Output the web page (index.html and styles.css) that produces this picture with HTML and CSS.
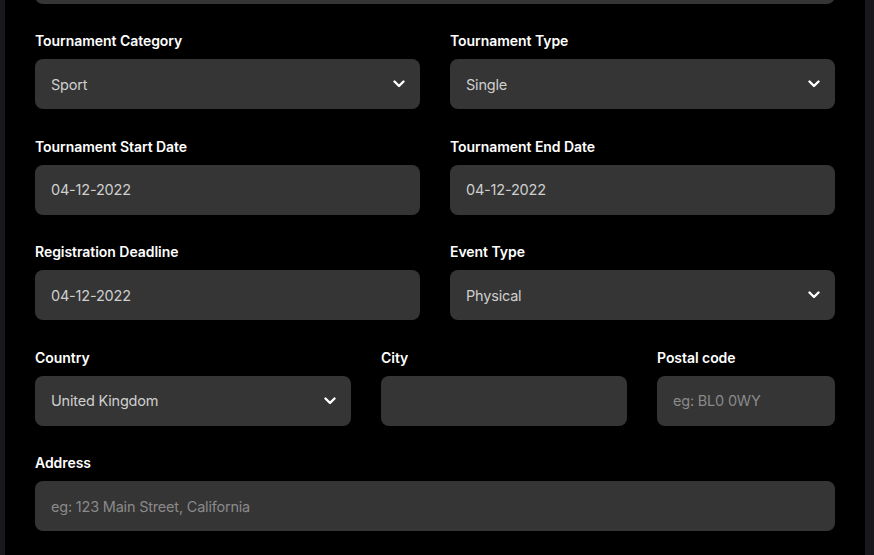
FILE: index.html
```html
<!DOCTYPE html>
<html lang="en">
<head>
<meta charset="utf-8">
<title>Tournament form</title>
<link rel="stylesheet" href="styles.css">
</head>
<body>
<div class="shell">
  <div class="panel">
    <form class="form">
      <div class="field">
        <div class="input"></div>
      </div>

      <div class="row two">
        <div class="field">
          <label class="label">Tournament Category</label>
          <div class="input select"><span class="value">Sport</span>
            <svg class="chev" viewBox="0 0 12 8" width="12" height="8"><path d="M1.5 1.5 L6 6 L10.5 1.5" fill="none" stroke="#fff" stroke-width="2.4" stroke-linecap="round" stroke-linejoin="round"/></svg>
          </div>
        </div>
        <div class="field">
          <label class="label">Tournament Type</label>
          <div class="input select"><span class="value">Single</span>
            <svg class="chev" viewBox="0 0 12 8" width="12" height="8"><path d="M1.5 1.5 L6 6 L10.5 1.5" fill="none" stroke="#fff" stroke-width="2.4" stroke-linecap="round" stroke-linejoin="round"/></svg>
          </div>
        </div>
      </div>

      <div class="row two">
        <div class="field">
          <label class="label">Tournament Start Date</label>
          <div class="input"><span class="value">04-12-2022</span></div>
        </div>
        <div class="field">
          <label class="label">Tournament End Date</label>
          <div class="input"><span class="value">04-12-2022</span></div>
        </div>
      </div>

      <div class="row two">
        <div class="field">
          <label class="label">Registration Deadline</label>
          <div class="input"><span class="value">04-12-2022</span></div>
        </div>
        <div class="field">
          <label class="label">Event Type</label>
          <div class="input select"><span class="value">Physical</span>
            <svg class="chev" viewBox="0 0 12 8" width="12" height="8"><path d="M1.5 1.5 L6 6 L10.5 1.5" fill="none" stroke="#fff" stroke-width="2.4" stroke-linecap="round" stroke-linejoin="round"/></svg>
          </div>
        </div>
      </div>

      <div class="row three">
        <div class="field">
          <label class="label">Country</label>
          <div class="input select"><span class="value">United Kingdom</span>
            <svg class="chev" viewBox="0 0 12 8" width="12" height="8"><path d="M1.5 1.5 L6 6 L10.5 1.5" fill="none" stroke="#fff" stroke-width="2.4" stroke-linecap="round" stroke-linejoin="round"/></svg>
          </div>
        </div>
        <div class="field">
          <label class="label">City</label>
          <div class="input"></div>
        </div>
        <div class="field">
          <label class="label">Postal code</label>
          <div class="input"><span class="placeholder">eg: BL0 0WY</span></div>
        </div>
      </div>

      <div class="field">
        <label class="label">Address</label>
        <div class="input"><span class="placeholder">eg: 123 Main Street, California</span></div>
      </div>
    </form>
  </div>
</div>
</body>
</html>
```

FILE: styles.css
```css
* { box-sizing: border-box; }
html, body {
  margin: 0;
  padding: 0;
  height: 100%;
  background: #19181d;
  overflow: hidden;
}
body {
  font-family: Inter, "Noto Sans", sans-serif;
}
.shell {
  display: flex;
  height: 100%;
  padding-left: 5px;
  padding-right: 9px;
}
.panel {
  flex: 1;
  background: #000;
  padding: 0 30px;
  overflow: hidden;
}
.form {
  display: flex;
  flex-direction: column;
  gap: 27.5px;
  margin-top: -46.5px;
}
.row {
  display: grid;
  column-gap: 30px;
}
.row.two { grid-template-columns: 1fr 1fr; }
.row.three { grid-template-columns: 316px 246px 1fr; }
.field {
  display: flex;
  flex-direction: column;
  gap: 8px;
  min-width: 0;
}
.label {
  height: 20px;
  line-height: 20px;
  font-size: 14px;
  font-weight: 600;
  color: #fff;
  letter-spacing: -0.05px;
}
.input {
  height: 50px;
  background: #353535;
  border-radius: 8px;
  display: flex;
  align-items: center;
  padding: 0 16px;
  font-size: 14.5px;
  letter-spacing: -0.2px;
}
.select {
  justify-content: space-between;
}
.value { color: #cfcfcf; }
.placeholder { color: #8a8a8a; }
.chev {
  margin-right: -1px;
  display: block;
}
```
